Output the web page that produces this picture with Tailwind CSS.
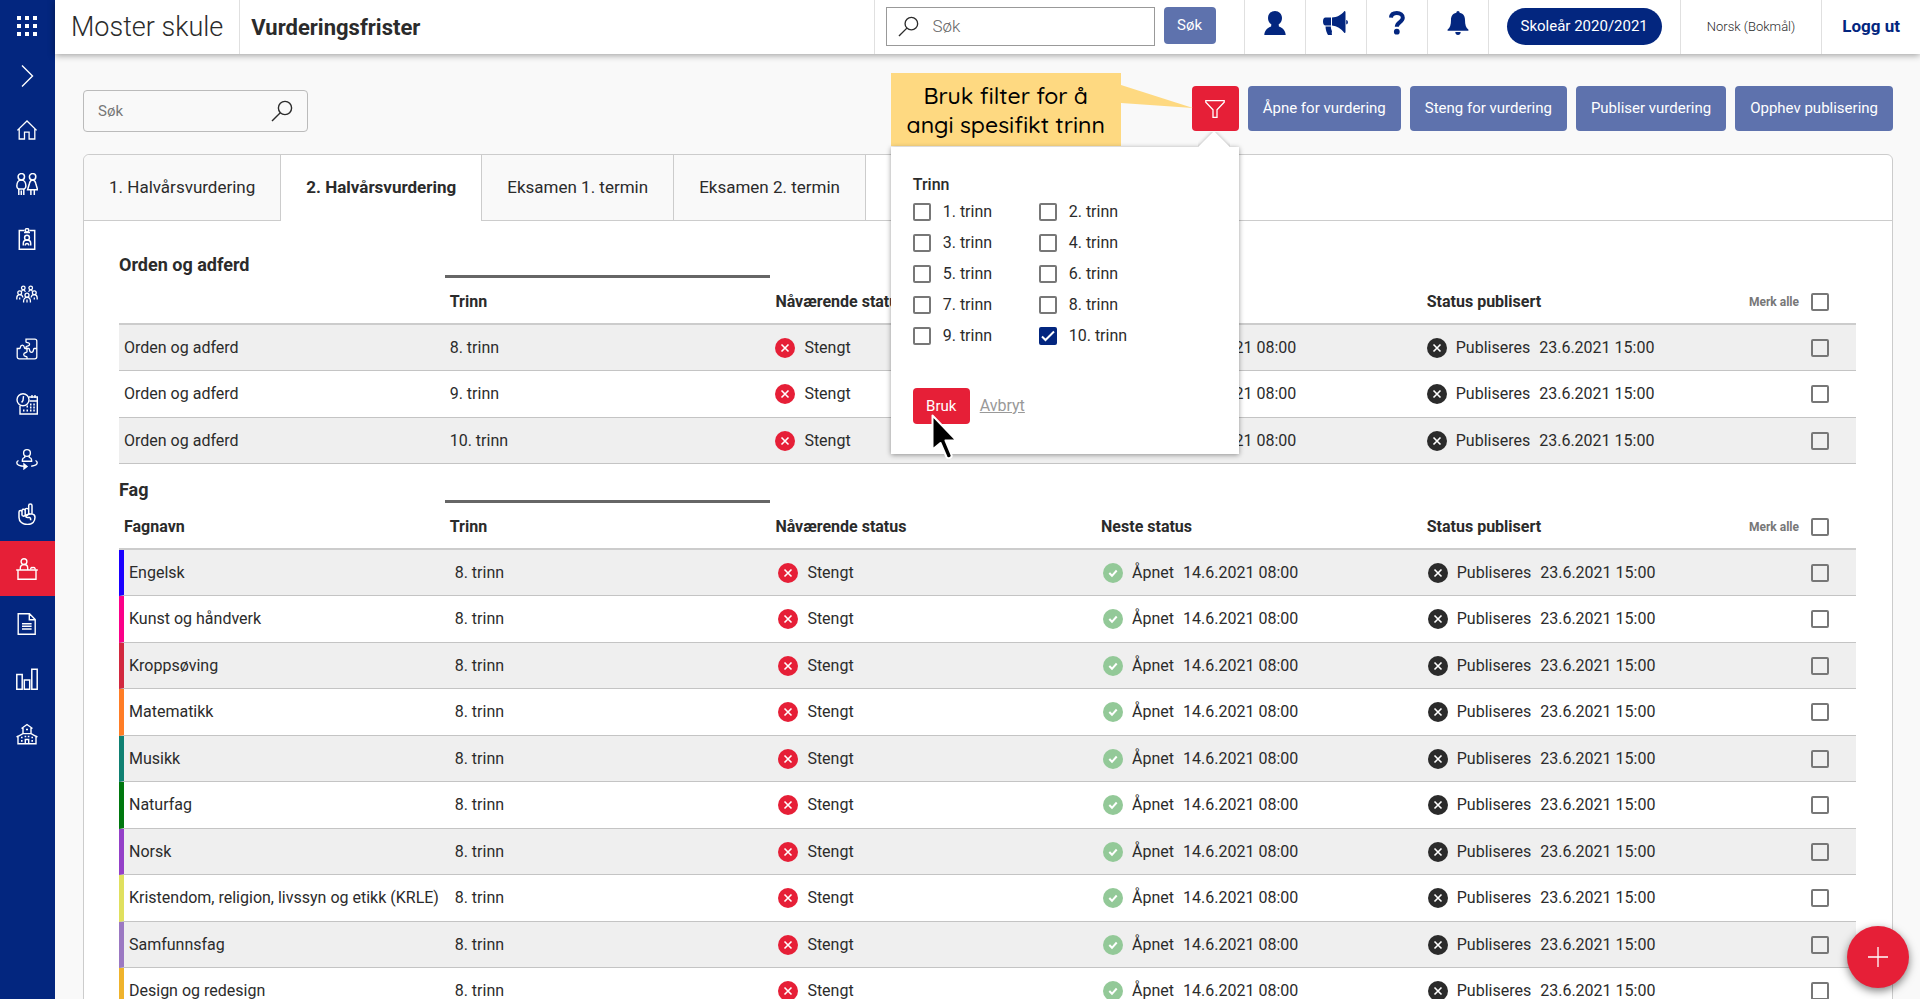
<!DOCTYPE html>
<html lang="nb">

<head>
  <meta charset="UTF-8">
  <meta name="viewport" content="width=device-width, initial-scale=1.0">
  <title>Vurderingsfrister</title>
  <script src="https://cdn.jsdelivr.net/npm/@tailwindcss/browser@4"></script>
</head>

<body class="flex h-screen overflow-hidden bg-[#f9f9f9] font-[Roboto,sans-serif] text-[15px] text-[#2b2b2b]">

  <!-- icons used more than once -->
  <svg class="hidden">
    <symbol id="i-search" viewBox="0 0 22 22">
      <g fill="none" stroke="#2b2b2b" stroke-width="1.4">
        <circle cx="14" cy="8" r="6.6" />
        <path d="M9.3 12.7 1 21" />
      </g>
    </symbol>
    <symbol id="i-closed" viewBox="0 0 20 20">
      <circle cx="10" cy="10" r="10" fill="currentColor" />
      <path d="M6.5 6.5l7 7M13.5 6.5l-7 7" fill="none" stroke="#fff" stroke-width="1.6" />
    </symbol>
    <symbol id="i-open" viewBox="0 0 20 20">
      <circle cx="10" cy="10" r="10" fill="currentColor" />
      <path d="M6.3 10l2.7 2.8 4.7-5.3" fill="none" stroke="#fff" stroke-width="2" />
    </symbol>
  </svg>

  <!-- sidebar -->
  <nav class="flex w-[55px] shrink-0 flex-col bg-[#03267f] pr-px text-white" aria-label="Hovedmeny">
    <a href="#" aria-label="Apper" class="flex h-[51px] items-center justify-center">
      <svg class="size-5" viewBox="0 0 20 20" fill="currentColor">
        <path d="M0 0h4v4H0zM8 0h4v4H8zM16 0h4v4h-4zM0 8h4v4H0zM8 8h4v4H8zM16 8h4v4h-4zM0 16h4v4H0zM8 16h4v4H8zM16 16h4v4h-4z" />
      </svg>
    </a>
    <a href="#" aria-label="Utvid meny" class="flex h-[50px] items-center justify-center">
      <svg class="size-[22px]" viewBox="0 0 22 22" fill="none" stroke="currentColor" stroke-width="1.4">
        <path d="M6 .5 16.5 11 6 21.5" />
      </svg>
    </a>
    <a href="#" aria-label="Hjem" class="flex h-[55px] items-center justify-center">
      <svg class="size-[22px]" viewBox="0 0 22 22" fill="none" stroke="currentColor" stroke-width="1.3">
        <path d="M1.4 12.4 11 3l9.600 9.400M3.200 11v10h5.300v-6.800h4.600V21h5.700V11" />
      </svg>
    </a>
    <a href="#" aria-label="Elever" class="flex h-[55px] items-center justify-center">
      <svg class="size-[22px]" viewBox="0 0 22 22" fill="none" stroke="currentColor" stroke-width="1.5">
        <circle cx="5.300" cy="3.800" r="3.200" />
        <circle cx="16.600" cy="3.800" r="3.200" />
        <path d="M5.300 7c-2.800 0-4.500 2.800-4.500 6 0 1.400.6 2.400 1.800 3h5.600c1.200-.6 1.700-1.600 1.700-3 0-3.200-1.800-6-4.600-6zM2.800 16v6M7.800 16v6M5.300 17.500V22M16.600 7c-1.900 0-2.700 1.400-3.100 3.200l-1.900 6.600h10l-1.900-6.600C19.300 8.400 18.500 7 16.600 7zM14.900 17v5M18.300 17v5" />
      </svg>
    </a>
    <a href="#" aria-label="Ansatte" class="flex h-[55px] items-center justify-center">
      <svg class="size-[22px]" viewBox="0 0 22 22" fill="none" stroke="currentColor" stroke-width="1.5">
        <path d="M8.500 2.500H3.300V21.300h15.400V2.500h-5.200M8 4.500h6" />
        <circle cx="11" cy="2.200" r="1.700" />
        <circle cx="11" cy="9.700" r="2.400" />
        <path d="M7.300 17.500v-2c0-2 1.600-3.400 3.700-3.400s3.700 1.400 3.700 3.400v2M9.300 17.500c0-1.300.6-2 1.700-2s1.700.7 1.700 2" />
      </svg>
    </a>
    <a href="#" aria-label="Grupper" class="flex h-[55px] items-center justify-center">
      <svg class="size-[22px]" viewBox="0 0 22 22" fill="none" stroke="currentColor" stroke-width="1.300">
        <circle cx="7.300" cy="5" r="1.800" />
        <circle cx="14.700" cy="5" r="1.800" />
        <circle cx="3.700" cy="9.800" r="1.900" />
        <circle cx="18.300" cy="9.800" r="1.900" />
        <circle cx="11" cy="12.200" r="2" />
        <path d="M.8 16.500v-1.600c0-1.900 1.200-3.200 2.900-3.200s2.900 1.100 3.200 2.800M21.200 16.500v-1.600c0-1.900-1.200-3.200-2.900-3.200s-2.900 1.100-3.200 2.800M3.700 14.500v2M18.300 14.500v2M7.600 19.500V18c0-2.200 1.400-3.700 3.400-3.700s3.400 1.500 3.400 3.700v1.500M11 16.500v3M5.500 8.600c.3-1 1-1.700 1.900-1.700 1 0 1.600.7 1.900 2M16.500 8.600c-.3-1-1-1.700-1.900-1.700-1 0-1.600.7-1.900 2" />
      </svg>
    </a>
    <a href="#" aria-label="Fag" class="flex h-[55px] items-center justify-center">
      <svg class="size-[22px]" viewBox="0 0 22 22" fill="none" stroke="currentColor" stroke-width="1.300">
        <path d="M10 4V1.200h8.800c1.200 0 2 .8 2 2v15.600c0 1.200-.8 2-2 2H3.200c-1.200 0-2-.8-2-2v-8.300h2.500c1.200 0-.2-3.300 2.600-3.300s1.500 3.300 2.700 3.300h2v3.300c0 1.200-3.300 0-3.300 2.700s3.300 1.500 3.300 2.700v1.600" />
        <path d="M10 4c0 1.200 3.600-.4 3.600 2.300S10 7.500 10 9v1.500M20.800 10.500h-2.600c-1.400 0 .2 3.900-2.700 3.900s-1.300-3.900-2.700-3.900H10" />
      </svg>
    </a>
    <a href="#" aria-label="Kalender" class="flex h-[55px] items-center justify-center">
      <svg class="size-[22px]" viewBox="0 0 22 22" fill="none" stroke="currentColor" stroke-width="1.400">
        <circle cx="7" cy="6.800" r="6" />
        <path d="M7.500 3.200 7 7.500 5.600 9.500M13 4h8.300v17H4v-8.200M13.500 8h7.800M16 2v3M19 2v3" />
        <path d="M10.500 13.500h1.500M14 11.500h1.500M17.300 11.500h1.500M14 14.500h1.500M17.300 14.500h1.500M7 17.500h1.500M10.500 17.500h1.500M14 17.500h1.500M17.300 17.500h1.500" stroke-width="1.800" />
      </svg>
    </a>
    <a href="#" aria-label="Oppfølging" class="flex h-[55px] items-center justify-center">
      <svg class="size-[22px]" viewBox="0 0 22 22" fill="none" stroke="currentColor" stroke-width="1.400">
        <circle cx="11" cy="5" r="3.400" />
        <path d="M9 8 8.600 9.400c-1.400.4-2.200 1.200-2.200 2.500v1.300h9.200v-1.300c0-1.300-.8-2.100-2.200-2.500L13 8M2.500 12.500C1.300 13.200.8 14 .8 14.800c0 2 3.300 3.400 8.200 3.600M19.500 12.500c1.200.7 1.700 1.500 1.700 2.300 0 1.700-2.300 3-6 3.500" />
        <path d="M8 16l3 2.400L8 20.800z" fill="currentColor" />
      </svg>
    </a>
    <a href="#" aria-label="Fravær" class="flex h-[55px] items-center justify-center">
      <svg class="size-[22px]" viewBox="0 0 22 22" fill="none" stroke="currentColor" stroke-width="1.500">
        <path d="M12.700 11V2.500c0-2 3.300-2 3.300 0v8.300c1.700.5 3 1.600 3 3.500 0 4-2.500 7.200-7.500 7.200S3 18.500 3 14.500V9c0-1.900 3-1.900 3 0V7.700c0-1.900 3.200-1.900 3.200 0v-.9c0-1.900 3.300-1.900 3.300 0M6 8.500v4M9.200 7.500v4.500M6 12.500c1 .8 2.200.8 3.200-.3 1 .8 2.200.6 3.300-.9M16 10.800l-4.500.6c-2.600.5-2.300 3.200.3 3h1.700c1.100.5 1.400 1.500 1 2.800" />
      </svg>
    </a>
    <a href="#" aria-label="Vurdering" aria-current="page" class="-mr-px flex h-[55px] items-center justify-center bg-[#e61f37] pr-px">
      <svg class="size-[22px]" viewBox="0 0 22 22" fill="none" stroke="currentColor" stroke-width="1.400">
        <circle cx="8" cy="3.600" r="2.900" />
        <path d="M4.300 11.500V10c0-2.100 1.500-3.500 3.700-3.500s3.700 1.400 3.700 3.500v1.500M.2 12h21.600M2 12v9.300h18V12" />
        <path d="M14.500 11.500c.3-1.800 1.200-2.500 2.300-1.800 1.100-.7 2.300 0 2.500 1.800" />
      </svg>
    </a>
    <a href="#" aria-label="Dokumenter" class="flex h-[55px] items-center justify-center">
      <svg class="size-[22px]" viewBox="0 0 22 22" fill="none" stroke="currentColor" stroke-width="1.400">
        <path d="M2.200.8h11.300l5.700 5.700v14.700h-17zM13.300 1v5.700h5.700M6 10.700h9.600M6 13.300h9.600M6 16h9.600" />
      </svg>
    </a>
    <a href="#" aria-label="Statistikk" class="flex h-[55px] items-center justify-center">
      <svg class="size-[22px]" viewBox="0 0 22 22" fill="none" stroke="currentColor" stroke-width="1.500">
        <path d="M.8 6.500h5.400v14.700H.8zM8.300 12h5.400v9.200H8.300zM15.800 1.200h5.400v20h-5.400z" />
      </svg>
    </a>
    <a href="#" aria-label="Skole" class="flex h-[55px] items-center justify-center">
      <svg class="size-[22px]" viewBox="0 0 22 22" fill="none" stroke="currentColor" stroke-width="1.400">
        <path d="M5.500 5.500 11 1.500l5.500 4M7 5v5.500l-5 2.800v7.500h18v-7.500l-5-2.800V5M.5 14l2-1.200M21.500 14l-2-1.200M9.300 20.500v-4h3.400v4M6.500 10.600h9" />
        <path d="M10 6.500h2M5 14.500h1.600M5 17.800h1.600M15.400 14.500H17M15.400 17.800H17M8.600 13.500h1.600M11.800 13.500h1.600" stroke-width="1.700" />
      </svg>
    </a>
  </nav>

  <div class="flex min-w-0 flex-1 flex-col">

    <!-- top bar -->
    <header class="relative z-10 flex h-[54px] shrink-0 bg-white shadow-[0_1px_7px_rgba(0,0,0,0.4)]">
      <div class="flex items-center border-r border-[#e0e0e0] px-4 text-[27px] font-light">Moster skule</div>
      <h1 class="flex flex-1 items-center px-[11px] text-[22px] font-bold">Vurderingsfrister</h1>
      <form class="flex w-[370px] border-l border-[#e0e0e0] pt-[7px] pl-[11px]">
        <label class="flex h-[39px] w-[269px] items-center gap-[14px] border border-[#999] px-[11px]">
          <svg class="size-[21px] shrink-0"><use href="#i-search" /></svg>
          <input type="search" placeholder="Søk" aria-label="Søk" class="w-full min-w-0 text-[17px] font-light outline-none placeholder:text-[#666]">
        </label>
        <button type="button" class="ml-[9px] h-[37px] w-[52px] rounded bg-[#5e72ad] text-white">Søk</button>
      </form>
      <a href="#" aria-label="Profil" class="flex w-[61px] justify-center border-l border-[#e0e0e0] pt-[11px] text-[#03267f]">
        <svg class="h-6 w-[22px]" viewBox="0 0 22 24" fill="currentColor">
          <path d="M11 0C7 0 4 3 4 7c0 2.700 1.200 5 3.300 6.300l-.2 2.200C3.500 16.800.5 19.500.3 24h21.400c-.2-4.500-3.200-7.200-6.800-8.500l-.2-2.200C16.800 12 18 9.700 18 7c0-4-3-7-7-7z" />
        </svg>
      </a>
      <a href="#" aria-label="Nyheter" class="flex w-[61px] justify-center border-l border-[#e0e0e0] pt-[11px] text-[#03267f]">
        <svg class="h-6 w-[25px]" viewBox="0 0 25 24" fill="currentColor">
          <path d="M8 6.500H2.500C1 6.500 0 8 0 10.500S1 14.500 2.500 14.500H8zM9 6.500c5-.4 9-2.200 12.500-6.500.7 0 1 .5 1 1.500v19c0 1-.3 1.500-1 1.500C18 17.500 14 15 9 14.600zM23.200 9c2.300.3 2.300 4 0 4.300zM2.500 15.500H8c-.5 2.700 1 3.700 1 5 0 .8-.6 1.200 0 2.700.1.500 0 .8-.5.8H5c-1-1.500-2.500-5-2.500-8.500z" />
        </svg>
      </a>
      <a href="#" aria-label="Hjelp" class="flex w-[61px] justify-center border-l border-[#e0e0e0] pt-[11px] text-[#03267f]">
        <svg class="h-6 w-4" viewBox="0 0 16 24">
          <path d="M2 6.600C2.200 3.700 4.500 2 7.800 2c3.500 0 6 1.900 6 4.800 0 4.200-6 4.400-6 9" fill="none" stroke="currentColor" stroke-width="4" />
          <circle cx="7.800" cy="20.700" r="2.900" fill="currentColor" />
        </svg>
      </a>
      <a href="#" aria-label="Varsler" class="flex w-[61px] justify-center border-l border-[#e0e0e0] pt-[11px] text-[#03267f]">
        <svg class="h-6 w-[22px]" viewBox="0 0 22 24" fill="currentColor">
          <path d="M11 0c1 0 1.600.7 1.600 1.800C16.800 2.600 18 6 18 9c0 5 1 7.800 3.300 9.500.5.500.2 1.300-.5 1.300H1.200c-.7 0-1-.8-.5-1.300C3 16.800 4 14 4 9c0-3 1.200-6.400 5.400-7.200C9.400.7 10 0 11 0zM8.300 21h5.400c0 1.800-1.200 3-2.700 3s-2.700-1.200-2.700-3z" />
        </svg>
      </a>
      <div class="border-l border-[#e0e0e0] px-[18px] pt-2">
        <button type="button" class="h-[37px] rounded-full bg-[#03267f] px-[14px] text-white">Skoleår 2020/2021</button>
      </div>
      <a href="#" class="flex items-center border-l border-[#e0e0e0] px-[26px] text-[13px] font-light">Norsk (Bokmål)</a>
      <a href="#" class="flex items-center border-l border-[#e0e0e0] px-5 text-[17px] font-bold text-[#03267f]">Logg ut</a>
    </header>

    <main class="pr-[27px] pl-7">

      <!-- search and actions -->
      <div class="flex h-[100px] items-start justify-between pt-8">
        <label class="mt-1 flex h-[42px] w-[225px] items-center rounded border border-[#bbb] px-[14px]">
          <input type="search" placeholder="Søk" aria-label="Søk i vurderingsfrister" class="w-full min-w-0 outline-none placeholder:text-[#777]">
          <svg class="size-[22px] shrink-0"><use href="#i-search" /></svg>
        </label>

        <div class="flex gap-[9px]">
          <div class="relative z-20">
            <button type="button" aria-label="Filter" aria-expanded="true" class="flex h-[45px] w-[47px] items-center justify-center rounded bg-[#e61f37] text-white">
              <svg class="h-[18px] w-5" viewBox="0 0 20 18" fill="none" stroke="currentColor" stroke-width="1.300">
                <path d="M.8.7h18.400v1.500L12 9.700v7.600H8V9.700L.8 2.200z" />
              </svg>
            </button>

            <!-- callout -->
            <div class="absolute -top-[13px] right-[118px] flex h-[73px] w-[230px] items-center justify-center bg-[#fed981] text-center font-[Quicksand,Lato,sans-serif] text-[23px] leading-[29px] font-medium text-black">
              <p>Bruk filter for å<br>angi spesifikt trinn</p>
              <svg class="absolute top-3 left-full h-6 w-[72px]" viewBox="0 0 72 24" fill="#fed981">
                <path d="M0 0l72 23L0 18z" />
              </svg>
            </div>

            <!-- filter popover -->
            <form class="absolute top-[61px] right-0 h-[307px] w-[348px] bg-white px-[22px] pt-[26px] text-base shadow-[0_1px_5px_rgba(0,0,0,0.4)]">
              <span class="absolute -top-[15px] right-[9px] h-[15px] w-8 overflow-hidden">
                <span class="absolute top-1 left-1 size-6 rotate-45 bg-white shadow-[0_0_4px_rgba(0,0,0,0.3)]"></span>
              </span>
              <fieldset>
                <legend class="leading-[23px] font-medium">Trinn</legend>
                <div id="trinn" class="grid w-[252px] grid-cols-2"></div>
              </fieldset>
              <div class="mt-[37px] flex items-center gap-[10px] text-[15px]">
                <button type="button" class="h-9 w-[57px] rounded bg-[#e61f37] text-white">Bruk</button>
                <a href="#" class="text-base text-[#999] underline">Avbryt</a>
              </div>
              <svg class="absolute top-[266px] left-10 h-[46px] w-7" viewBox="0 0 28 46">
                <path d="M1.500 2.500v34l8-6.500 6 14c1.500 2.500 6 .5 5-2l-6-14.500h11z" fill="#000" stroke="#fff" stroke-width="2" stroke-linejoin="round" />
              </svg>
            </form>
          </div>
          <button type="button" class="h-[45px] rounded bg-[#5e72ad] px-[15px] text-white">Åpne for vurdering</button>
          <button type="button" class="h-[45px] rounded bg-[#5e72ad] px-[15px] text-white">Steng for vurdering</button>
          <button type="button" class="h-[45px] rounded bg-[#5e72ad] px-[15px] text-white">Publiser vurdering</button>
          <button type="button" class="h-[45px] rounded bg-[#5e72ad] px-[15px] text-white">Opphev publisering</button>
        </div>
      </div>

      <section class="rounded-t-md border border-[#ccc] bg-white">
        <!-- tabs -->
        <div role="tablist" class="flex h-[66px] text-[17px]">
          <button type="button" role="tab" class="rounded-tl-md border-r border-b border-[#ccc] bg-[#f9f9f9] px-[25px]">1. Halvårsvurdering</button>
          <button type="button" role="tab" aria-selected="true" class="border-r border-[#ccc] px-[25px] font-bold">2. Halvårsvurdering</button>
          <button type="button" role="tab" class="border-r border-b border-[#ccc] bg-[#f9f9f9] px-[25px]">Eksamen 1. termin</button>
          <button type="button" role="tab" class="border-r border-b border-[#ccc] bg-[#f9f9f9] px-[25px]">Eksamen 2. termin</button>
          <div class="flex-1 border-b border-[#ccc]"></div>
        </div>

        <div class="pr-9 pl-[35px] text-base">
          <h2 class="flex h-[54px] items-end text-[18px] leading-5 font-bold">Orden og adferd</h2>
          <table class="w-full table-fixed border-separate border-spacing-0">
            <thead>
              <tr class="h-[50px] text-left *:border-t-[3px] *:border-b-2 *:border-t-transparent *:border-b-[#ccc] *:px-[5px] *:pt-[3px] *:font-bold">
                <th class="w-[18.75%]"></th>
                <th class="w-[18.75%] border-t-[#666]!">Trinn</th>
                <th class="w-[18.75%]">Nåværende status</th>
                <th class="w-[18.75%]">Neste status</th>
                <th class="w-[18.75%]">Status publisert</th>
                <th>
                  <label class="flex items-center justify-end gap-3 pr-[22px] text-xs whitespace-nowrap text-[#777]">Merk alle
                    <input type="checkbox" class="size-[18px] shrink-0 appearance-none rounded-xs border-2 border-[#777] bg-white">
                  </label>
                </th>
              </tr>
            </thead>
            <tbody id="orden"></tbody>
          </table>

          <h2 class="flex h-9 items-end text-[18px] leading-5 font-bold">Fag</h2>
          <table class="w-full table-fixed border-separate border-spacing-0">
            <thead>
              <tr class="h-[50px] text-left *:border-t-[3px] *:border-b-2 *:border-t-transparent *:border-b-[#ccc] *:px-[5px] *:pt-[3px] *:font-bold">
                <th class="w-[18.75%]">Fagnavn</th>
                <th class="w-[18.75%] border-t-[#666]!">Trinn</th>
                <th class="w-[18.75%]">Nåværende status</th>
                <th class="w-[18.75%]">Neste status</th>
                <th class="w-[18.75%]">Status publisert</th>
                <th>
                  <label class="flex items-center justify-end gap-3 pr-[22px] text-xs whitespace-nowrap text-[#777]">Merk alle
                    <input type="checkbox" class="size-[18px] shrink-0 appearance-none rounded-xs border-2 border-[#777] bg-white">
                  </label>
                </th>
              </tr>
            </thead>
            <tbody id="fag"></tbody>
          </table>
        </div>
      </section>
    </main>
  </div>

  <button type="button" aria-label="Legg til" class="fixed right-[11px] bottom-[11px] z-30 flex size-[62px] items-center justify-center rounded-full bg-[#e61f37] text-white shadow-[0_3px_8px_rgba(0,0,0,0.5)]">
    <svg class="size-5" viewBox="0 0 20 20" stroke="currentColor" stroke-width="1.300">
      <path d="M10 0v20M0 10h20" />
    </svg>
  </button>

  <script>
    const orden = ["8. trinn", "9. trinn", "10. trinn"];
    const fag = [
      ["Engelsk", "border-l-[#1a00ff]"],
      ["Kunst og håndverk", "border-l-[#fb0089]"],
      ["Kroppsøving", "border-l-[#d2283f]"],
      ["Matematikk", "border-l-[#ff7d26]"],
      ["Musikk", "border-l-[#0f8072]"],
      ["Naturfag", "border-l-[#00780f]"],
      ["Norsk", "border-l-[#9440c8]"],
      ["Kristendom, religion, livssyn og etikk (KRLE)", "border-l-[#e0e05e]"],
      ["Samfunnsfag", "border-l-[#9b78c2]"],
      ["Design og redesign", "border-l-[#efb32c]"],
    ];

    const status = (icon, color, text, date) => `
      <div class="flex items-center gap-[9px]">
        <svg class="size-5 shrink-0 ${color}"><use href="#${icon}" /></svg>
        <span>${text}</span>
        ${date ? `<span>${date}</span>` : ""}
      </div>`;

    const row = (name, trinn, nameClass, pads) => `
      <tr class="odd:h-[46px] even:h-[47px] odd:bg-[#efefef] *:border-b *:border-b-[#c4c4c4]">
        <td class="pl-[5px] whitespace-nowrap ${nameClass}">${name}</td>
        <td class="${pads[0]}">${trinn}</td>
        <td class="${pads[1]}">${status("i-closed", "text-[#e61f37]", "Stengt")}</td>
        <td class="${pads[2]}">${status("i-open", "text-[#93c998]", "Åpnet", "14.6.2021 08:00")}</td>
        <td class="${pads[3]}">${status("i-closed", "text-[#2b2b2b]", "Publiseres", "23.6.2021 15:00")}</td>
        <td class="pr-[27px]">
          <input type="checkbox" aria-label="Merk ${name} ${trinn}" class="ml-auto block size-[18px] appearance-none rounded-xs border-2 border-[#777]">
        </td>
      </tr>`;

    document.getElementById("orden").innerHTML = orden
      .map((t) => row("Orden og adferd", t, "", ["pl-[5px]", "pl-[5px]", "pl-[5px]", "pl-[5px]"]))
      .join("");

    document.getElementById("fag").innerHTML = fag
      .map(([name, color]) => row(name, "8. trinn", "border-l-[5px] " + color, ["pl-[10px]", "pl-2", "pl-[7px]", "pl-[6px]"]))
      .join("");

    let boxes = "";
    for (let i = 1; i <= 10; i++) {
      boxes += `
        <label class="relative flex h-[31px] items-center gap-3">
          <input type="checkbox" ${i === 10 ? "checked" : ""} class="peer size-[18px] appearance-none rounded-xs border-2 border-[#777] checked:border-[#03267f] checked:bg-[#03267f]">
          <svg class="absolute left-0 hidden size-[18px] peer-checked:block" viewBox="0 0 18 18" fill="none" stroke="#fff" stroke-width="2"><path d="M3 9.500l3.500 3.500L15 4.500" /></svg>
          ${i}. trinn
        </label>`;
    }
    document.getElementById("trinn").innerHTML = boxes;
  </script>
</body>

</html>
